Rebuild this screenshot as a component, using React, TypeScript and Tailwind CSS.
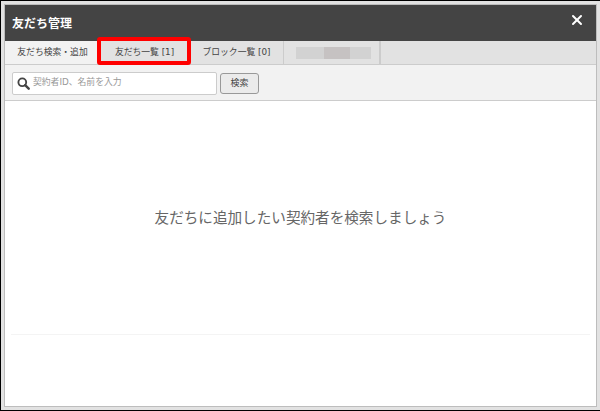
import { X } from "lucide-react";

const font = { fontFamily: '"DejaVu Sans", "Noto Sans CJK JP", sans-serif' };

const App = () => {
  return (
    <div className="w-[600px] h-[411px] overflow-hidden border border-black border-r-0 bg-[#e2e2e2] p-[3px]">
      <div className="h-full flex flex-col bg-white border border-[#bdbdbd]" style={font}>
        <div className="h-[36px] shrink-0 bg-[#444444] flex items-center justify-between pl-[7px] pr-[11px]">
          <span className="text-[12px] font-bold text-white mt-[2px]">友だち管理</span>
          <X className="w-[16px] h-[16px] text-white mb-[7px]" strokeWidth={3} />
        </div>
        <div className="h-[24px] shrink-0 bg-[#e2e2e2] border-b border-[#cccccc] flex text-[8.8px] text-[#444444]">
          <div className="w-[92px] pl-[3px] bg-[#f2f2f2] flex items-center justify-center">友だち検索・追加</div>
          <div className="relative w-[93px] pl-[2px] flex items-center justify-center">
            友だち一覧 [1]
            <div className="absolute left-0 -right-[1px] -top-[4px] -bottom-[1px] border-4 border-[#ff0000] rounded-[3px]" />
          </div>
          <div className="w-[94px] border-r border-[#cccccc] flex items-center justify-center">ブロック一覧 [0]</div>
          <div className="w-[97px] border-r-2 border-[#cccccc] flex items-center pl-[12px]">
            <div className="w-[75px] h-[12px] bg-[#d2d2d2] flex justify-center">
              <div className="w-[26px] ml-[6px] h-full bg-[#c6c2c2]" />
            </div>
          </div>
        </div>
        <div className="h-[36px] shrink-0 bg-[#f2f2f2] border-b border-[#cccccc] flex items-center gap-[3px] pl-[7px]">
          <div className="w-[205px] h-[23px] mt-[1px] bg-white border border-[#cccccc] rounded-[2px] flex items-center pl-[4px] gap-[3px]">
            <svg viewBox="0 0 14 14" className="w-[13px] h-[13px] shrink-0">
              <circle cx="5.7" cy="5.7" r="4.2" fill="none" stroke="#444444" strokeWidth="2" />
              <path d="M8.8 8.8 L12.6 12.6" stroke="#444444" strokeWidth="2.6" strokeLinecap="round" />
            </svg>
            <span className="text-[8.8px] text-[#999999]">契約者ID、名前を入力</span>
          </div>
          <div className="w-[39px] h-[21px] mt-[2px] bg-[#ebebeb] border border-[#999999] rounded-[3px] flex items-center justify-center text-[9px] text-[#444444]">
            検索
          </div>
        </div>
        <div className="flex-1 flex flex-col px-[6px]">
          <div className="h-[234px] shrink-0 border-b border-[#f4f4f4] flex items-center justify-center text-[14.6px] text-[#666666]">
            友だちに追加したい契約者を検索しましょう
          </div>
        </div>
      </div>
    </div>
  );
};

export default App;
